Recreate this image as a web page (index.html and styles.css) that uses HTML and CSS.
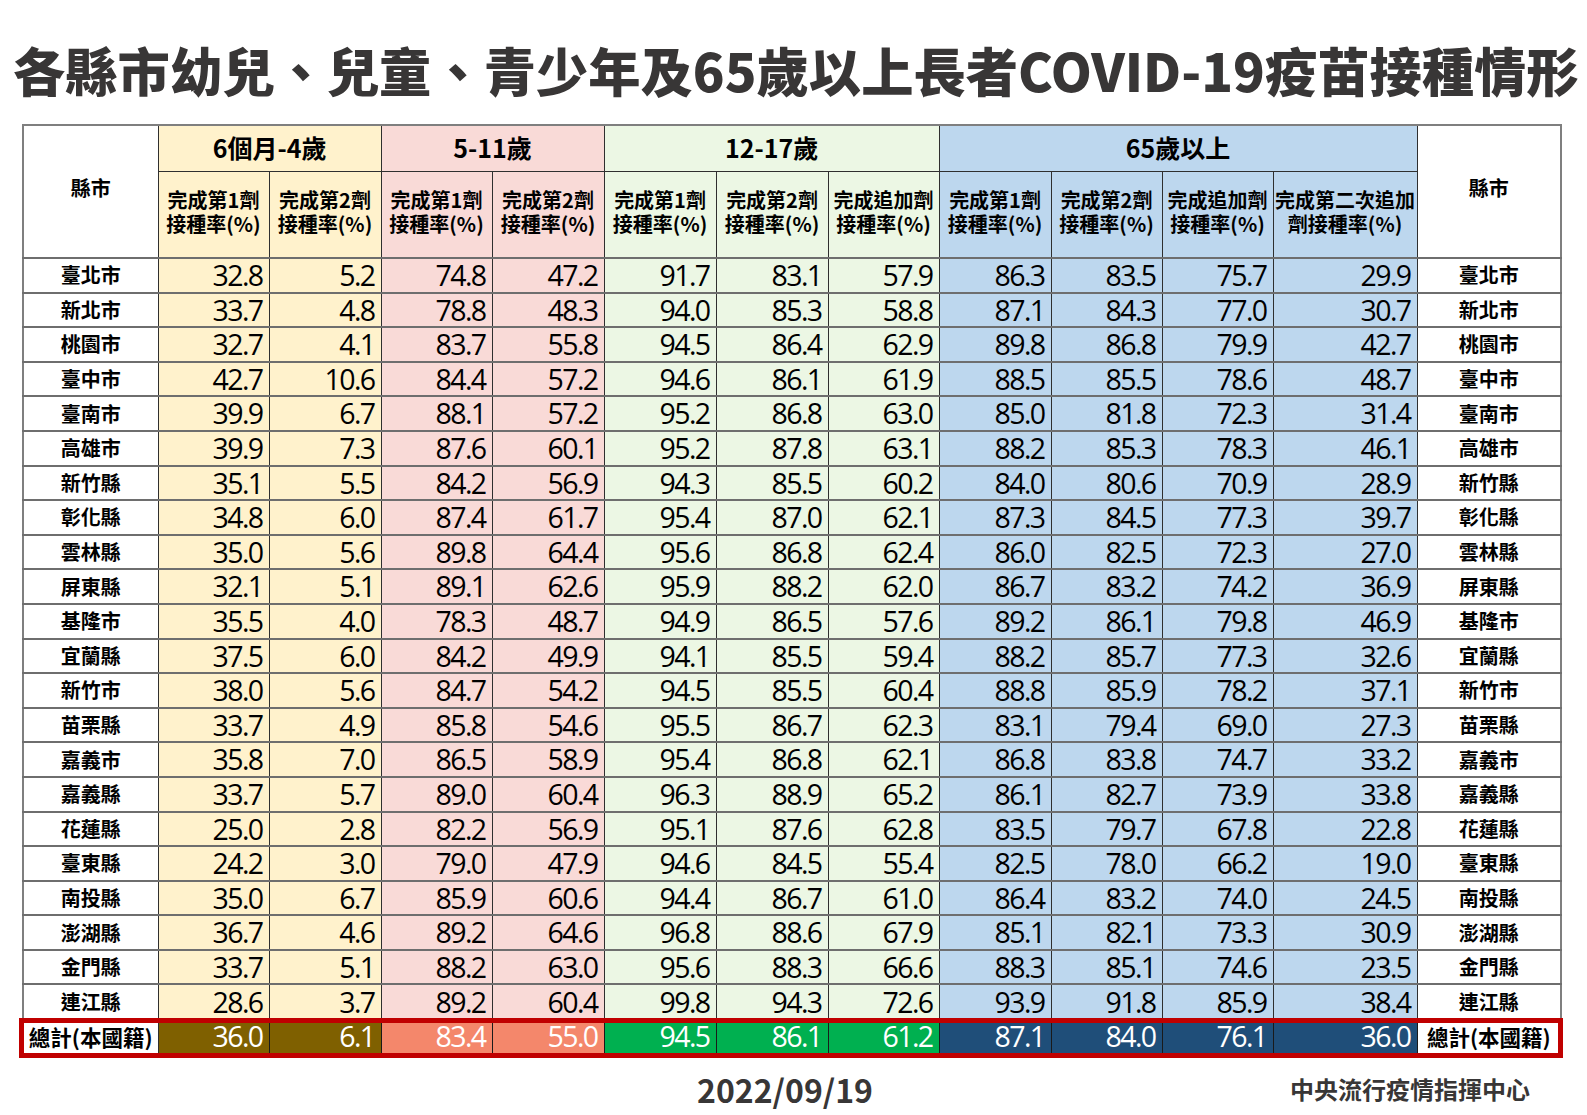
FILE: index.html
```html
<!DOCTYPE html>
<html lang="zh-Hant">
<head>
<meta charset="utf-8">
<title>各縣市幼兒、兒童、青少年及65歲以上長者COVID-19疫苗接種情形</title>
<link rel="stylesheet" href="styles.css">
</head>
<body>
<h1 class="title">各縣市幼兒、兒童、青少年及65歲以上長者COVID-19疫苗接種情形</h1>
<div class="table-wrap">
<table class="vac">
<colgroup>
<col class="w-name">
<col class="w-a bg-y"><col class="w-b bg-y">
<col class="w-a bg-p"><col class="w-b bg-p">
<col class="w-b bg-g"><col class="w-b bg-g"><col class="w-a bg-g">
<col class="w-b bg-b"><col class="w-a bg-b"><col class="w-a bg-b"><col class="w-c bg-b">
<col class="w-c">
</colgroup>
<thead>
<tr class="h1">
<th rowspan="2" class="hname">縣市</th>
<th colspan="2" class="grp">6個月-4歲</th>
<th colspan="2" class="grp">5-11歲</th>
<th colspan="3" class="grp">12-17歲</th>
<th colspan="4" class="grp">65歲以上</th>
<th rowspan="2" class="hname">縣市</th>
</tr>
<tr class="h2">
<th>完成第1劑<br>接種率(%)</th>
<th>完成第2劑<br>接種率(%)</th>
<th>完成第1劑<br>接種率(%)</th>
<th>完成第2劑<br>接種率(%)</th>
<th>完成第1劑<br>接種率(%)</th>
<th>完成第2劑<br>接種率(%)</th>
<th>完成追加劑<br>接種率(%)</th>
<th>完成第1劑<br>接種率(%)</th>
<th>完成第2劑<br>接種率(%)</th>
<th>完成追加劑<br>接種率(%)</th>
<th>完成第二次追加<br>劑接種率(%)</th>
</tr>
</thead>
<tbody>
<tr><th>臺北市</th><td>32.8</td><td>5.2</td><td>74.8</td><td>47.2</td><td>91.7</td><td>83.1</td><td>57.9</td><td>86.3</td><td>83.5</td><td>75.7</td><td>29.9</td><th>臺北市</th></tr>
<tr><th>新北市</th><td>33.7</td><td>4.8</td><td>78.8</td><td>48.3</td><td>94.0</td><td>85.3</td><td>58.8</td><td>87.1</td><td>84.3</td><td>77.0</td><td>30.7</td><th>新北市</th></tr>
<tr><th>桃園市</th><td>32.7</td><td>4.1</td><td>83.7</td><td>55.8</td><td>94.5</td><td>86.4</td><td>62.9</td><td>89.8</td><td>86.8</td><td>79.9</td><td>42.7</td><th>桃園市</th></tr>
<tr><th>臺中市</th><td>42.7</td><td>10.6</td><td>84.4</td><td>57.2</td><td>94.6</td><td>86.1</td><td>61.9</td><td>88.5</td><td>85.5</td><td>78.6</td><td>48.7</td><th>臺中市</th></tr>
<tr><th>臺南市</th><td>39.9</td><td>6.7</td><td>88.1</td><td>57.2</td><td>95.2</td><td>86.8</td><td>63.0</td><td>85.0</td><td>81.8</td><td>72.3</td><td>31.4</td><th>臺南市</th></tr>
<tr><th>高雄市</th><td>39.9</td><td>7.3</td><td>87.6</td><td>60.1</td><td>95.2</td><td>87.8</td><td>63.1</td><td>88.2</td><td>85.3</td><td>78.3</td><td>46.1</td><th>高雄市</th></tr>
<tr><th>新竹縣</th><td>35.1</td><td>5.5</td><td>84.2</td><td>56.9</td><td>94.3</td><td>85.5</td><td>60.2</td><td>84.0</td><td>80.6</td><td>70.9</td><td>28.9</td><th>新竹縣</th></tr>
<tr><th>彰化縣</th><td>34.8</td><td>6.0</td><td>87.4</td><td>61.7</td><td>95.4</td><td>87.0</td><td>62.1</td><td>87.3</td><td>84.5</td><td>77.3</td><td>39.7</td><th>彰化縣</th></tr>
<tr><th>雲林縣</th><td>35.0</td><td>5.6</td><td>89.8</td><td>64.4</td><td>95.6</td><td>86.8</td><td>62.4</td><td>86.0</td><td>82.5</td><td>72.3</td><td>27.0</td><th>雲林縣</th></tr>
<tr><th>屏東縣</th><td>32.1</td><td>5.1</td><td>89.1</td><td>62.6</td><td>95.9</td><td>88.2</td><td>62.0</td><td>86.7</td><td>83.2</td><td>74.2</td><td>36.9</td><th>屏東縣</th></tr>
<tr><th>基隆市</th><td>35.5</td><td>4.0</td><td>78.3</td><td>48.7</td><td>94.9</td><td>86.5</td><td>57.6</td><td>89.2</td><td>86.1</td><td>79.8</td><td>46.9</td><th>基隆市</th></tr>
<tr><th>宜蘭縣</th><td>37.5</td><td>6.0</td><td>84.2</td><td>49.9</td><td>94.1</td><td>85.5</td><td>59.4</td><td>88.2</td><td>85.7</td><td>77.3</td><td>32.6</td><th>宜蘭縣</th></tr>
<tr><th>新竹市</th><td>38.0</td><td>5.6</td><td>84.7</td><td>54.2</td><td>94.5</td><td>85.5</td><td>60.4</td><td>88.8</td><td>85.9</td><td>78.2</td><td>37.1</td><th>新竹市</th></tr>
<tr><th>苗栗縣</th><td>33.7</td><td>4.9</td><td>85.8</td><td>54.6</td><td>95.5</td><td>86.7</td><td>62.3</td><td>83.1</td><td>79.4</td><td>69.0</td><td>27.3</td><th>苗栗縣</th></tr>
<tr><th>嘉義市</th><td>35.8</td><td>7.0</td><td>86.5</td><td>58.9</td><td>95.4</td><td>86.8</td><td>62.1</td><td>86.8</td><td>83.8</td><td>74.7</td><td>33.2</td><th>嘉義市</th></tr>
<tr><th>嘉義縣</th><td>33.7</td><td>5.7</td><td>89.0</td><td>60.4</td><td>96.3</td><td>88.9</td><td>65.2</td><td>86.1</td><td>82.7</td><td>73.9</td><td>33.8</td><th>嘉義縣</th></tr>
<tr><th>花蓮縣</th><td>25.0</td><td>2.8</td><td>82.2</td><td>56.9</td><td>95.1</td><td>87.6</td><td>62.8</td><td>83.5</td><td>79.7</td><td>67.8</td><td>22.8</td><th>花蓮縣</th></tr>
<tr><th>臺東縣</th><td>24.2</td><td>3.0</td><td>79.0</td><td>47.9</td><td>94.6</td><td>84.5</td><td>55.4</td><td>82.5</td><td>78.0</td><td>66.2</td><td>19.0</td><th>臺東縣</th></tr>
<tr><th>南投縣</th><td>35.0</td><td>6.7</td><td>85.9</td><td>60.6</td><td>94.4</td><td>86.7</td><td>61.0</td><td>86.4</td><td>83.2</td><td>74.0</td><td>24.5</td><th>南投縣</th></tr>
<tr><th>澎湖縣</th><td>36.7</td><td>4.6</td><td>89.2</td><td>64.6</td><td>96.8</td><td>88.6</td><td>67.9</td><td>85.1</td><td>82.1</td><td>73.3</td><td>30.9</td><th>澎湖縣</th></tr>
<tr><th>金門縣</th><td>33.7</td><td>5.1</td><td>88.2</td><td>63.0</td><td>95.6</td><td>88.3</td><td>66.6</td><td>88.3</td><td>85.1</td><td>74.6</td><td>23.5</td><th>金門縣</th></tr>
<tr><th>連江縣</th><td>28.6</td><td>3.7</td><td>89.2</td><td>60.4</td><td>99.8</td><td>94.3</td><td>72.6</td><td>93.9</td><td>91.8</td><td>85.9</td><td>38.4</td><th>連江縣</th></tr>
<tr class="total"><th class="tname">總計(本國籍)</th><td class="t-y">36.0</td><td class="t-y">6.1</td><td class="t-p">83.4</td><td class="t-p">55.0</td><td class="t-g">94.5</td><td class="t-g">86.1</td><td class="t-g">61.2</td><td class="t-b">87.1</td><td class="t-b">84.0</td><td class="t-b">76.1</td><td class="t-b">36.0</td><th class="tname">總計(本國籍)</th></tr>
</tbody>
</table>
<div class="total-frame"></div>
</div>
<footer class="foot">
<span></span>
<span class="date">2022/09/19</span>
<span class="org">中央流行疫情指揮中心</span>
</footer>
</body>
</html>
```
FILE: styles.css
```css
html, body {
  margin: 0;
  padding: 0;
  background: #ffffff;
}
body {
  font-family: "Noto Sans CJK TC", "Noto Sans", sans-serif;
  color: #000;
  width: 1587px;
  height: 1115px;
  overflow: hidden;
}
.title {
  margin: 39px 0 25px 13px;
  height: 60px;
  line-height: 60px;
  font-size: 52.3px;
  font-weight: 900;
  color: #383636;
  white-space: nowrap;
  letter-spacing: 0;
}
.table-wrap {
  position: relative;
  width: 1538px;
  margin-left: 22px;
}
.vac {
  border-collapse: collapse;
  table-layout: fixed;
  width: 1538px;
  border: 2px solid #7f7f7f;
}
.w-name { width: 135px; }
.w-a { width: 111px; }
.w-b { width: 112px; }
.w-c { width: 144px; }
.bg-y { background: #fff2cc; }
.bg-p { background: #f9dad7; }
.bg-g { background: #ecf7e4; }
.bg-b { background: #bdd7ee; }

.vac th, .vac td {
  padding: 0;
  border-left: 1px solid #2f2f2f;
  border-right: 1px solid #2f2f2f;
  border-top: 2px solid #6e6e6e;
  border-bottom: 2px solid #6e6e6e;
  white-space: nowrap;
}
.vac .h1 { height: 46px; }
.vac .h2 { height: 87px; }
.vac .h1 th, .vac .h2 th { border-top: 1px solid #2f2f2f; border-bottom: 1px solid #2f2f2f; }
.vac .grp {
  font-size: 25px;
  font-weight: 700;
  text-align: center;
  vertical-align: middle;
  padding-bottom: 3px;
}
.vac .hname {
  font-size: 20px;
  font-weight: 700;
  text-align: center;
  vertical-align: middle;
  padding-bottom: 8px;
  background: #fff;
}
.vac .h2 th {
  font-size: 20px;
  line-height: 24px;
  font-weight: 700;
  text-align: center;
  vertical-align: middle;
  padding-bottom: 5px;
}
.vac tbody tr { height: 34.6px; }
.vac tbody th {
  font-size: 20px;
  font-weight: 700;
  text-align: center;
  vertical-align: middle;
  background: #fff;
  line-height: 1;
}
.vac tbody td {
  font-family: "Open Sans", "Noto Sans", sans-serif;
  font-size: 28.5px;
  letter-spacing: -1.6px;
  line-height: 1;
  text-align: right;
  vertical-align: middle;
  padding-right: 6px;
}
.vac .total td {
  color: #fff;
  border-left: 1px solid #1a1a1a;
  border-right: 1px solid #1a1a1a;
}
.vac .total .tname {
  font-size: 21.5px;
  letter-spacing: 0;
}
.vac .t-y { background: #7f6000; }
.vac .t-p { background: #f4876b; }
.vac .t-g { background: #00b050; }
.vac .t-b { background: #1f4e79; }
.total-frame {
  position: absolute;
  left: -3px;
  right: -3px;
  bottom: -3px;
  height: 30px;
  border: 5px solid #c00000;
  pointer-events: none;
}
.foot {
  display: grid;
  grid-template-columns: 1fr auto 1fr;
  align-items: center;
  width: 1538px;
  margin: 14px 0 0 22px;
  height: 40px;
  color: #383636;
  font-weight: 700;
}
.date {
  font-size: 32px;
  line-height: 40px;
  padding-right: 12px;
}
.org {
  font-size: 24px;
  line-height: 40px;
  text-align: right;
  padding-right: 30px;
}
```
